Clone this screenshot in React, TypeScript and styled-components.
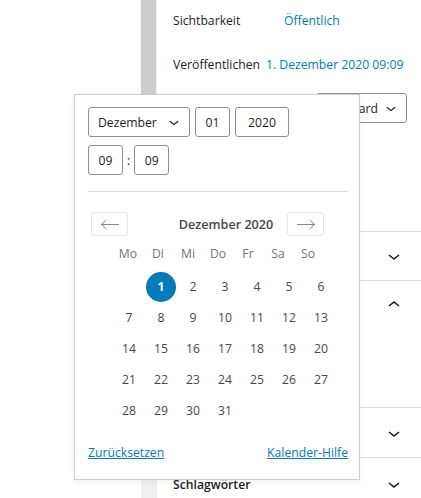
import styled, { createGlobalStyle } from "styled-components";

const FONT = `"Open Sans", "Noto Sans", "Liberation Sans", sans-serif`;

const GlobalStyle = createGlobalStyle`
    html, body {
        margin: 0;
        padding: 0;
        background: #fff;
    }
    body {
        font-family: ${FONT};
        font-size: 12.2px;
        color: #1e1e1e;
    }
`;

const Page = styled.div`
    position: relative;
    display: flex;
    width: 421px;
    height: 498px;
    overflow: hidden;
    background: #fff;
`;
const EditorArea = styled.div`
    width: 141px;
    flex-shrink: 0;
    background: #fff;
`;
const ScrollTrack = styled.div`
    width: 16px;
    flex-shrink: 0;
    background: #f0f0f0;
`;
const ScrollThumb = styled.div`
    width: 15px;
    height: 300px;
    background: #cdcdcd;
`;
const Sidebar = styled.div`
    width: 264px;
    min-width: 0;
    flex-shrink: 0;
`;
const StatusPanel = styled.div`
    height: 232px;
    box-sizing: border-box;
    padding: 0 14px 0 16px;
    border-bottom: 1px solid #e0e0e0;
`;
const StatusRow = styled.div<{ $h: number }>`
    display: flex;
    align-items: center;
    height: ${(p) => p.$h}px;
`;
const StatusLabel = styled.span<{ $w: number }>`
    width: ${(p) => p.$w}px;
    flex-shrink: 0;
    white-space: nowrap;
`;
const LinkValue = styled.span`
    color: #007cba;
    white-space: nowrap;
`;
const FormatRow = styled.div`
    display: flex;
    align-items: center;
    justify-content: space-between;
    margin-top: 5px;
`;
const FakeSelect = styled.div<{ $w: number }>`
    display: flex;
    align-items: center;
    justify-content: space-between;
    width: ${(p) => p.$w}px;
    height: 30px;
    box-sizing: border-box;
    padding: 0 5px 0 9px;
    border: 1px solid #8c8f94;
    border-radius: 3px;
    background: #fff;
    color: #1e1e1e;
    svg {
        flex-shrink: 0;
    }
`;
const Panel = styled.div`
    border-bottom: 1px solid #e0e0e0;
`;
const PanelHeader = styled.div<{ $h?: number }>`
    display: flex;
    align-items: center;
    justify-content: space-between;
    height: ${(p) => p.$h ?? 48}px;
    padding: 0 15px 0 16px;
    font-weight: 600;
    color: #1e1e1e;
`;
const PanelBody = styled.div`
    height: 78px;
    padding: 0 16px;
`;

const Popover = styled.div`
    position: absolute;
    left: 74px;
    top: 94px;
    width: 286px;
    height: 386px;
    box-sizing: border-box;
    padding: 12px 11px 0 13px;
    background: #fff;
    border: 1px solid #cccccc;
    box-shadow: 0 2px 6px rgba(0, 0, 0, 0.06);
    display: flex;
    flex-direction: column;
`;
const FieldRow = styled.div`
    display: flex;
    align-items: center;
    gap: 5px;
    margin-bottom: 8px;
`;
const NumberInput = styled.input<{ $w: number }>`
    width: ${(p) => p.$w}px;
    height: 30px;
    box-sizing: border-box;
    padding: 0;
    border: 1px solid #8c8f94;
    border-radius: 3px;
    font-family: ${FONT};
    font-size: 12.2px;
    color: #1e1e1e;
    text-align: center;
    background: #fff;
    outline: none;
`;
const Colon = styled.span`
    margin: 0 -1px;
    color: #1e1e1e;
`;
const Divider = styled.hr`
    margin: 8px 0 0;
    border: 0;
    border-top: 1px solid #dddddd;
`;
const NavRow = styled.div`
    display: flex;
    align-items: center;
    margin-top: 20px;
    padding-left: 3px;
`;
const NavButton = styled.button`
    display: flex;
    align-items: center;
    justify-content: center;
    width: 37px;
    height: 24px;
    padding: 0;
    border: 1px solid #e4e7e7;
    border-radius: 3px;
    background: #fff;
`;
const MonthTitle = styled.div`
    width: 159px;
    box-sizing: border-box;
    padding-left: 37px;
    text-align: center;
    font-size: 12.6px;
    font-weight: 600;
    color: #484848;
`;
const CalendarBody = styled.div`
    margin-left: 25px;
`;
const WeekHeader = styled.div`
    display: grid;
    grid-template-columns: repeat(7, 30px);
    height: 20px;
    align-items: center;
    margin-top: 7px;
    color: #757575;
`;
const WeekDay = styled.span`
    text-align: center;
`;
const DayGrid = styled.div`
    display: grid;
    grid-template-columns: repeat(7, 32px);
    grid-auto-rows: 31px;
    margin-top: 8px;
`;
const Day = styled.div<{ $selected?: boolean }>`
    display: flex;
    align-items: center;
    justify-content: center;
    color: ${(p) => (p.$selected ? "#fff" : "#484848")};
    font-weight: ${(p) => (p.$selected ? 700 : 400)};
    span {
        display: flex;
        align-items: center;
        justify-content: center;
        width: 30px;
        height: 30px;
        border-radius: 50%;
        background: ${(p) => (p.$selected ? "#007cba" : "transparent")};
    }
`;
const Footer = styled.div`
    display: flex;
    justify-content: space-between;
    margin-top: 18px;
`;
const FooterLink = styled.a`
    color: #007cba;
    text-decoration: underline;
    cursor: pointer;
`;

const Chevron = ({ up, size = 24 }: { up?: boolean; size?: number }) => (
    <svg width={size} height={size} viewBox="0 0 24 24" style={up ? { transform: "rotate(180deg)" } : undefined}>
        <path d="M17.5 11.6L12 16l-5.5-4.4.9-1.2L12 14l4.5-3.6 1 1.2z" fill="#1e1e1e" />
    </svg>
);

const Arrow = ({ right }: { right?: boolean }) => (
    <svg width="20" height="11" viewBox="0 0 20 11" style={right ? { transform: "scaleX(-1)" } : undefined}>
        <path d="M19 5.5H1.5M6.5 0.8L1.5 5.5l5 4.7" fill="none" stroke="#82888a" strokeWidth="1" />
    </svg>
);

const WEEKDAYS = ["Mo", "Di", "Mi", "Do", "Fr", "Sa", "So"];

export default function App() {
    const days: (number | null)[] = [null, ...Array.from({ length: 31 }, (_, i) => i + 1)];
    return (
        <Page>
            <GlobalStyle />
            <EditorArea />
            <ScrollTrack>
                <ScrollThumb />
            </ScrollTrack>
            <Sidebar>
                <StatusPanel>
                    <StatusRow $h={40}>
                        <StatusLabel $w={111}>Sichtbarkeit</StatusLabel>
                        <LinkValue>Öffentlich</LinkValue>
                    </StatusRow>
                    <StatusRow $h={48}>
                        <StatusLabel $w={93}>Veröffentlichen</StatusLabel>
                        <LinkValue>1. Dezember 2020 09:09</LinkValue>
                    </StatusRow>
                    <FormatRow>
                        <span>Beitragsformat</span>
                        <FakeSelect $w={91}>
                            Standard
                            <Chevron size={20} />
                        </FakeSelect>
                    </FormatRow>
                </StatusPanel>
                <Panel>
                    <PanelHeader>
                        Permalink
                        <Chevron />
                    </PanelHeader>
                </Panel>
                <Panel>
                    <PanelHeader>
                        Kategorien
                        <Chevron up />
                    </PanelHeader>
                    <PanelBody />
                </Panel>
                <Panel>
                    <PanelHeader $h={49}>
                        Beitragsbild
                        <Chevron />
                    </PanelHeader>
                </Panel>
                <Panel>
                    <PanelHeader $h={52}>
                        Schlagwörter
                        <Chevron />
                    </PanelHeader>
                </Panel>
            </Sidebar>

            <Popover>
                <FieldRow>
                    <FakeSelect $w={102}>
                        Dezember
                        <Chevron size={20} />
                    </FakeSelect>
                    <NumberInput $w={35} defaultValue="01" readOnly />
                    <NumberInput $w={54} defaultValue="2020" readOnly />
                </FieldRow>
                <FieldRow>
                    <NumberInput $w={35} defaultValue="09" readOnly />
                    <Colon>:</Colon>
                    <NumberInput $w={35} defaultValue="09" readOnly />
                </FieldRow>
                <Divider />
                <NavRow>
                    <NavButton>
                        <Arrow />
                    </NavButton>
                    <MonthTitle>Dezember 2020</MonthTitle>
                    <NavButton>
                        <Arrow right />
                    </NavButton>
                </NavRow>
                <CalendarBody>
                    <WeekHeader>
                        {WEEKDAYS.map((d) => (
                            <WeekDay key={d}>{d}</WeekDay>
                        ))}
                    </WeekHeader>
                    <DayGrid>
                        {days.map((d, i) => (
                            <Day key={i} $selected={d === 1}>
                                {d !== null && <span>{d}</span>}
                            </Day>
                        ))}
                    </DayGrid>
                </CalendarBody>
                <Footer>
                    <FooterLink>Zurücksetzen</FooterLink>
                    <FooterLink>Kalender-Hilfe</FooterLink>
                </Footer>
            </Popover>
        </Page>
    );
}
